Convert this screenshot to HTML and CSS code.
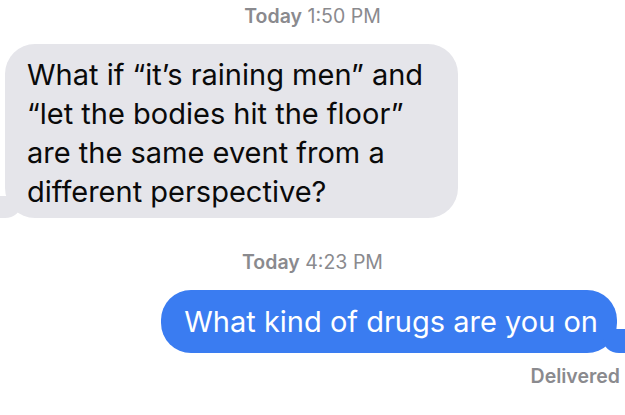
FILE: index.html
```html
<!DOCTYPE html>
<html>
<head>
<meta charset="utf-8">
<link rel="stylesheet" href="styles.css">
</head>
<body>
<div class="thread">
  <div class="stamp"><b>Today</b> 1:50 PM</div>
  <div class="row row-in">
    <div class="bubble in">What if “it’s raining men” and<br>“let the bodies hit the floor”<br>are the same event from a<br>different perspective?</div>
  </div>
  <div class="stamp stamp-2"><b>Today</b> 4:23 PM</div>
  <div class="row row-out">
    <div class="bubble out">What kind of drugs are you on</div>
  </div>
  <div class="status">Delivered</div>
</div>
</body>
</html>
```
FILE: styles.css
```css
html, body {
  margin: 0;
  padding: 0;
  background: #ffffff;
}
body {
  font-family: Inter, "Liberation Sans", sans-serif;
  width: 625px;
  height: 415px;
  overflow: hidden;
}
.thread {
  display: flex;
  flex-direction: column;
}
.stamp {
  text-align: center;
  font-size: 19.5px;
  line-height: 22px;
  padding-top: 5px;
  color: #8a8a8e;
}
.stamp b {
  font-weight: 600;
}
.stamp-2 {
  padding-top: 33px;
}
.row {
  display: flex;
}
.row-in {
  justify-content: flex-start;
  padding-left: 5px;
  margin-top: 17px;
}
.row-out {
  justify-content: flex-end;
  padding-right: 8px;
  margin-top: 17px;
}
.bubble {
  position: relative;
  font-size: 29px;
  line-height: 39px;
  border-radius: 30px;
  white-space: nowrap;
}
.in {
  background: #e5e5ea;
  color: #0a0a0a;
  width: 409px;
  padding: 11px 22px 7px 22px;
}
.out {
  background: #3a7cf1;
  color: #ffffff;
  padding: 12px 19px 12px 23px;
}
.in::before {
  content: "";
  position: absolute;
  bottom: 0;
  left: -6px;
  width: 22px;
  height: 22px;
  background: #e5e5ea;
  border-bottom-right-radius: 16px 14px;
}
.in::after {
  content: "";
  position: absolute;
  bottom: 0;
  left: -26px;
  width: 20px;
  height: 24px;
  background: #ffffff;
  border-bottom-right-radius: 10px;
}
.out::before {
  content: "";
  position: absolute;
  bottom: 0;
  right: -8px;
  width: 22px;
  height: 24px;
  background: #3a7cf1;
  border-bottom-left-radius: 16px 14px;
}
.out::after {
  content: "";
  position: absolute;
  bottom: 0;
  right: -28px;
  width: 20px;
  height: 26px;
  background: #ffffff;
  border-bottom-left-radius: 10px;
}
.status {
  text-align: right;
  padding-right: 5px;
  margin-top: 12px;
  font-size: 19.5px;
  line-height: 22px;
  font-weight: 600;
  color: #8a8a8e;
}
```
